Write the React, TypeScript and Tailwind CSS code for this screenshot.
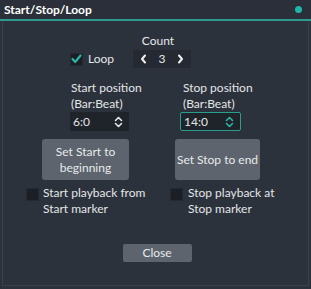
import React from "react";

function Chevrons({ teal }: { teal?: boolean }) {
  const c = teal ? "#2bb3a3" : "#e6e6e6";
  return (
    <svg width="9" height="12" viewBox="0 0 9 12" fill="none">
      <path d="M1.5 4.5 L4.5 1.5 L7.5 4.5" stroke={c} strokeWidth="1.6" strokeLinecap="round" strokeLinejoin="round" />
      <path d="M1.5 7.5 L4.5 10.5 L7.5 7.5" stroke={c} strokeWidth="1.6" strokeLinecap="round" strokeLinejoin="round" />
    </svg>
  );
}

function Box({ checked }: { checked?: boolean }) {
  return (
    <div className="flex h-[13px] w-[13px] shrink-0 items-center justify-center bg-[#1c2026] border border-[#242930]">
      {checked && (
        <svg width="11" height="10" viewBox="0 0 11 10" fill="none">
          <path d="M1.5 5 L4.2 8 L9.5 1.5" stroke="#2bb3a3" strokeWidth="2.2" strokeLinecap="round" strokeLinejoin="round" />
        </svg>
      )}
    </div>
  );
}

function PosInput({ value, focused }: { value: string; focused?: boolean }) {
  return (
    <div
      className={`flex h-[19px] items-center justify-between bg-[#1f242b] pl-[3px] pr-[6px] ${
        focused ? "border-[1.5px] border-[#2a9d8f] rounded-[2px]" : ""
      }`}
    >
      <span>{value}</span>
      <Chevrons teal={focused} />
    </div>
  );
}

export default function App() {
  return (
    <div
      className="w-[311px] h-[289px] bg-[#2c323c] text-[#e4e6e8] text-[12px] leading-[16px] overflow-hidden"
      style={{ fontFamily: 'Lato, "Noto Sans", sans-serif' }}
    >
      <div className="flex h-[21px] items-center justify-between pl-[4px] pr-[9px] border-b-2 border-[#2a9d8f] bg-[#2a2f39]">
        <span className="font-bold text-white text-[12px]">Start/Stop/Loop</span>
        <span className="h-[7px] w-[7px] rounded-full bg-[#1fb5a8]" />
      </div>

      <div className="h-[265px] mx-[2px] border-x border-b border-[#3a404a] flex flex-col">
        {/* loop + count */}
        <div className="flex items-end mt-[12px]">
          <div className="flex items-center gap-[5px] ml-[67px] w-[62px] h-[18px]">
            <Box checked />
            <span>Loop</span>
          </div>
          <div className="flex flex-col items-center ml-[1px] w-[58px]">
            <span className="mb-[1px] pr-[8px]">Count</span>
            <div className="flex h-[18px] w-full items-center justify-between bg-[#252a32] px-[7px]">
              <svg width="7" height="10" viewBox="0 0 7 10" fill="none">
                <path d="M5 1.5 L2 5 L5 8.5" stroke="#f0f0f0" strokeWidth="2" strokeLinecap="round" strokeLinejoin="round" />
              </svg>
              <span>3</span>
              <svg width="7" height="10" viewBox="0 0 7 10" fill="none">
                <path d="M2 1.5 L5 5 L2 8.5" stroke="#f0f0f0" strokeWidth="2" strokeLinecap="round" strokeLinejoin="round" />
              </svg>
            </div>
          </div>
        </div>

        {/* positions */}
        <div className="flex mt-[12px]">
          <div className="ml-[39px] w-[87px] flex flex-col">
            <div className="ml-[28px] w-[59px] flex flex-col">
              <span className="whitespace-nowrap pl-[1px]">Start position</span>
              <span className="whitespace-nowrap pl-[1px]">(Bar:Beat)</span>
              <PosInput value="6:0" />
            </div>
            <button className="mt-[8px] h-[41px] w-[87px] rounded-[3px] bg-[#5d646e] text-[#e8eaec] leading-[16px]">
              Set Start to
              <br />
              beginning
            </button>
          </div>
          <div className="ml-[46px] w-[85px] flex flex-col">
            <div className="ml-[5px] w-[61px] flex flex-col">
              <span className="whitespace-nowrap pl-[3px]">Stop position</span>
              <span className="whitespace-nowrap pl-[3px]">(Bar:Beat)</span>
              <PosInput value="14:0" focused />
            </div>
            <button className="mt-[8px] h-[41px] w-[85px] rounded-[3px] bg-[#5d646e] text-[#e8eaec]">
              Set Stop to end
            </button>
          </div>
        </div>

        {/* playback options */}
        <div className="flex mt-[5px]">
          <div className="flex items-start ml-[23px] w-[144px] gap-[4px]">
            <div className="mt-[3px]">
              <Box />
            </div>
            <span>
              Start playback from
              <br />
              Start marker
            </span>
          </div>
          <div className="flex items-start gap-[5px]">
            <div className="mt-[3px]">
              <Box />
            </div>
            <span>
              Stop playback at
              <br />
              Stop marker
            </span>
          </div>
        </div>

        <div className="flex justify-center mt-[27px]">
          <button className="h-[18px] w-[69px] rounded-[2px] bg-[#5d646e] text-[#e8eaec] ml-[3px]">Close</button>
        </div>
      </div>
    </div>
  );
}
